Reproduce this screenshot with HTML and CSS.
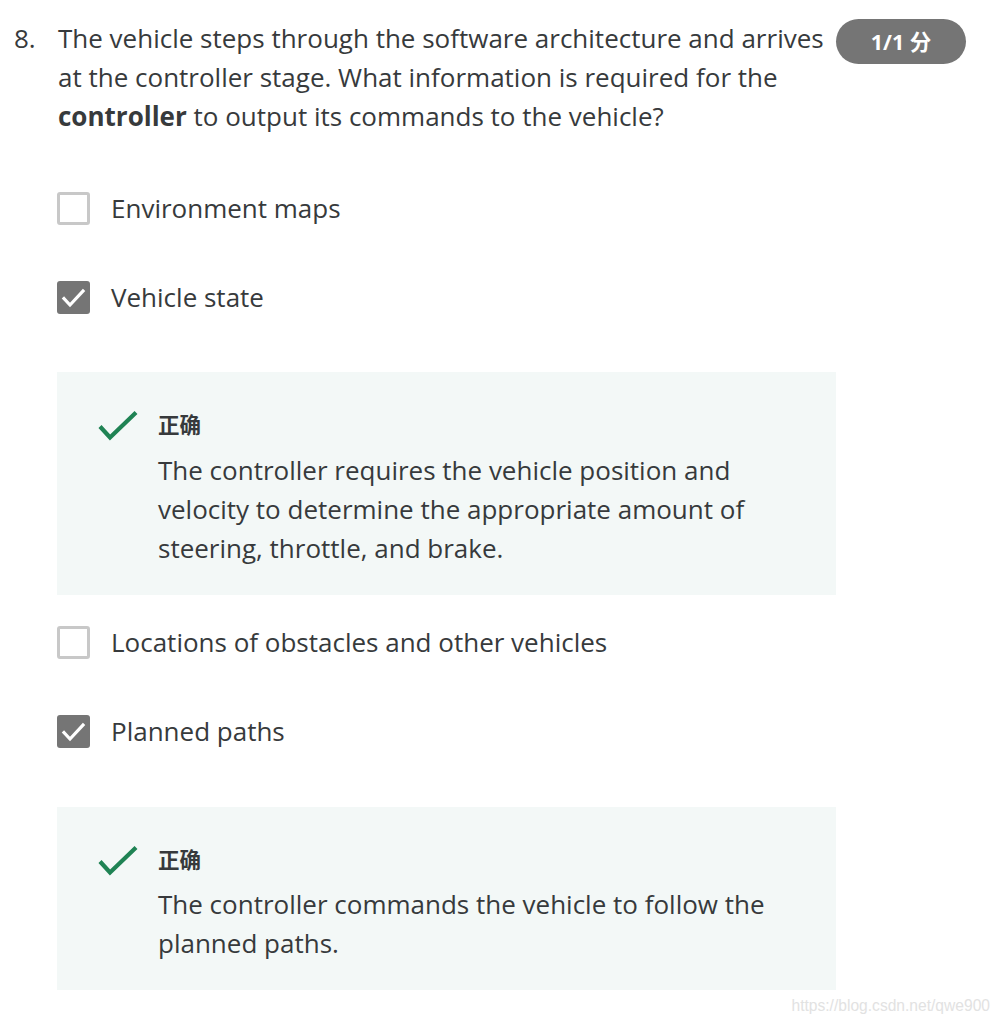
FILE: index.html
```html
<!DOCTYPE html>
<html lang="zh-CN">
<head>
  <meta charset="UTF-8" />
  <title>Quiz</title>
  <link rel="stylesheet" href="styles.css">
</head>
<body>

<div class="question">
  <div class="num">8.</div>
  <div class="qtext">The vehicle steps through the software architecture and arrives at the controller stage. What information is required for the <strong>controller</strong> to output its commands to the vehicle?</div>
  <div class="badge">1/1 分</div>
</div>

<div class="options">
  <div class="option first">
    <span class="box"></span>
    <span class="label">Environment maps</span>
  </div>
  <div class="option">
    <span class="box checked">
      <svg viewBox="0 0 33 33" width="33" height="33"><path d="M7 17.5l6 6.5 13-14" fill="none" stroke="#fff" stroke-width="3.2" stroke-linecap="square"/></svg>
    </span>
    <span class="label">Vehicle state</span>
  </div>
  <div class="feedback">
    <svg class="ok" viewBox="0 0 42 32" width="42" height="32"><path d="M3 16.5l10 11 26-25" fill="none" stroke="#1f8354" stroke-width="4.2"/></svg>
    <div class="fb-body">
      <div class="fb-title">正确</div>
      <div class="fb-text">The controller requires the vehicle position and velocity to determine the appropriate amount of steering, throttle, and brake.</div>
    </div>
  </div>
  <div class="option after-fb">
    <span class="box"></span>
    <span class="label">Locations of obstacles and other vehicles</span>
  </div>
  <div class="option">
    <span class="box checked">
      <svg viewBox="0 0 33 33" width="33" height="33"><path d="M7 17.5l6 6.5 13-14" fill="none" stroke="#fff" stroke-width="3.2" stroke-linecap="square"/></svg>
    </span>
    <span class="label">Planned paths</span>
  </div>
  <div class="feedback">
    <svg class="ok" viewBox="0 0 42 32" width="42" height="32"><path d="M3 16.5l10 11 26-25" fill="none" stroke="#1f8354" stroke-width="4.2"/></svg>
    <div class="fb-body">
      <div class="fb-title">正确</div>
      <div class="fb-text">The controller commands the vehicle to follow the planned paths.</div>
    </div>
  </div>
</div>

<div class="watermark">https://blog.csdn.net/qwe900</div>

</body>
</html>
```

FILE: styles.css
```css
body {
  margin: 0;
  padding: 18.5px 0 0 14px;
  font-family: "Open Sans", "Noto Sans CJK SC", sans-serif;
  font-size: 26px;
  line-height: 39px;
  color: #373a3c;
  background: #fff;
  width: 1001px;
  height: 1024px;
  box-sizing: border-box;
  position: relative;
  overflow: hidden;
}
.question {
  display: flex;
  align-items: flex-start;
}
.num {
  width: 44px;
  flex: none;
}
.qtext {
  width: 768px;
  flex: none;
}
.qtext strong {
  font-weight: bold;
}
.badge {
  flex: none;
  margin-left: 10px;
  width: 130px;
  height: 45px;
  border-radius: 23px;
  background: #757575;
  color: #fff;
  font-weight: bold;
  font-size: 21.5px;
  line-height: 45px;
  text-align: center;
  margin-top: 0.5px;
}
.options {
  margin-left: 43px;
  width: 779px;
}
.option {
  display: flex;
  align-items: center;
  height: 39px;
  margin-top: 50px;
}
.option.first {
  margin-top: 53px;
}
.option.after-fb {
  margin-top: 28.5px;
}
.box {
  width: 33px;
  height: 33px;
  box-sizing: border-box;
  border: 3px solid #c8c8c8;
  border-radius: 3px;
  flex: none;
  margin-right: 21px;
}
.box.checked {
  border: none;
  background: #757575;
}
.box svg {
  display: block;
}
.feedback {
  margin-top: 55.5px;
  background: #f3f8f7;
  display: flex;
  padding: 38px 20px 27px 40px;
}
.ok {
  flex: none;
  margin-right: 19px;
}
.fb-title {
  font-size: 21.5px;
  font-weight: bold;
  line-height: 30px;
  margin-bottom: 10.5px;
}
.fb-text {
  width: 620px;
}
.watermark {
  position: absolute;
  right: 11px;
  bottom: 9px;
  font-family: "Liberation Sans", Arial, sans-serif;
  font-size: 15.6px;
  line-height: 18px;
  color: #e2e2e2;
}
```
